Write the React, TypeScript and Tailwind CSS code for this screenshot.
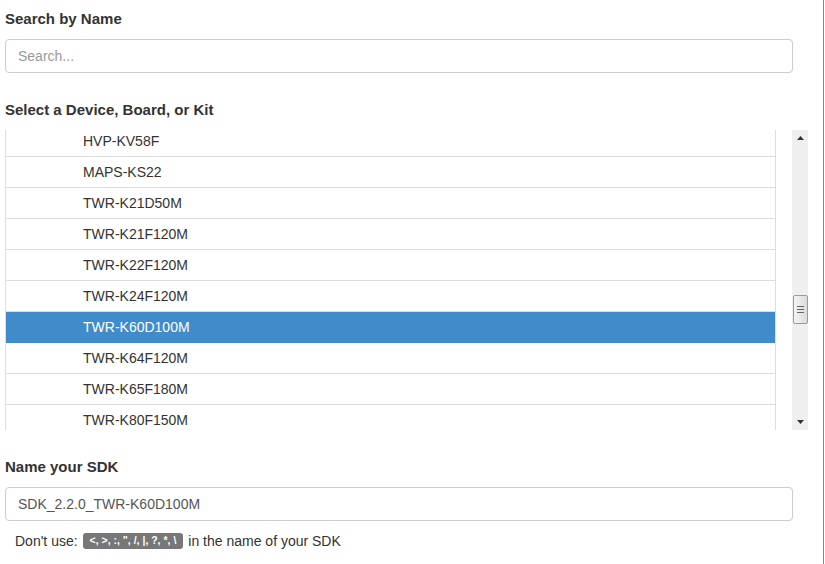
import React from "react";

const devices = [
  "HVP-KV58F",
  "MAPS-KS22",
  "TWR-K21D50M",
  "TWR-K21F120M",
  "TWR-K22F120M",
  "TWR-K24F120M",
  "TWR-K60D100M",
  "TWR-K64F120M",
  "TWR-K65F180M",
  "TWR-K80F150M",
];

function Scrollbar() {
  return (
    <div className="flex h-[300px] w-4 flex-col items-center bg-[#efefef]">
      <div className="flex h-4 w-full items-center justify-center">
        <svg width="7" height="4" viewBox="0 0 7 4">
          <path d="M3.5 0 L7 4 L0 4 Z" fill="#333" />
        </svg>
      </div>
      <div className="h-[149px]" />
      <div className="flex h-[29px] w-[15px] flex-col items-center justify-center gap-[2px] rounded-[2px] border border-[#9a9a9a] bg-gradient-to-r from-[#f4f4f4] to-[#dcdcdc]">
        <div className="h-px w-[7px] bg-[#666]" />
        <div className="h-px w-[7px] bg-[#666]" />
        <div className="h-px w-[7px] bg-[#666]" />
      </div>
      <div className="flex-1" />
      <div className="flex h-4 w-full items-center justify-center">
        <svg width="7" height="4" viewBox="0 0 7 4">
          <path d="M0 0 L7 0 L3.5 4 Z" fill="#333" />
        </svg>
      </div>
    </div>
  );
}

export default function App() {
  const selected = "TWR-K60D100M";
  return (
    <div
      className="h-screen w-[824px] overflow-hidden border-r border-[#7a8a86] bg-white pl-[5px] pt-[9px] text-[14px] text-[#333]"
      style={{ fontFamily: '"Liberation Sans", Arial, sans-serif' }}
    >
      <div className="h-5 text-[15px] font-bold leading-5">Search by Name</div>
      <input
        className="mt-[10px] block h-[34px] w-[788px] rounded-[4px] border border-[#ccc] px-3 text-[14px] text-[#555] outline-none placeholder:text-[#999]"
        placeholder="Search..."
      />
      <div className="mt-[27px] h-5 text-[15px] font-bold leading-5">
        Select a Device, Board, or Kit
      </div>
      <div className="mt-[10px] flex gap-4">
        <div className="h-[300px] w-[771px] overflow-hidden border-x border-[#ddd]">
          <div className="-mt-[4px]">
            {devices.map((d) => (
              <div
                key={d}
                className={
                  d === selected
                    ? "h-[31px] border-b border-[#428bca] bg-[#428bca] py-[5px] pl-[77px] leading-5 text-white"
                    : "h-[31px] border-b border-[#ddd] py-[5px] pl-[77px] leading-5"
                }
              >
                {d}
              </div>
            ))}
          </div>
        </div>
        <Scrollbar />
      </div>
      <div className="mt-[27px] h-5 text-[15px] font-bold leading-5">Name your SDK</div>
      <input
        className="mt-[10px] block h-[34px] w-[788px] rounded-[4px] border border-[#ccc] px-3 text-[14px] text-[#555] outline-none"
        defaultValue="SDK_2.2.0_TWR-K60D100M"
      />
      <div className="mt-[10px] flex h-5 items-center pl-[10px] leading-5">
        <span>Don't use:</span>
        <span className="ml-[5px] rounded-[3px] bg-[#777] px-[7px] pb-[2px] pt-[1px] text-[10.5px] font-bold leading-[13px] text-white">
          {'<, >, :, ", /, |, ?, *, \\'}
        </span>
        <span className="ml-[5px]">in the name of your SDK</span>
      </div>
    </div>
  );
}
